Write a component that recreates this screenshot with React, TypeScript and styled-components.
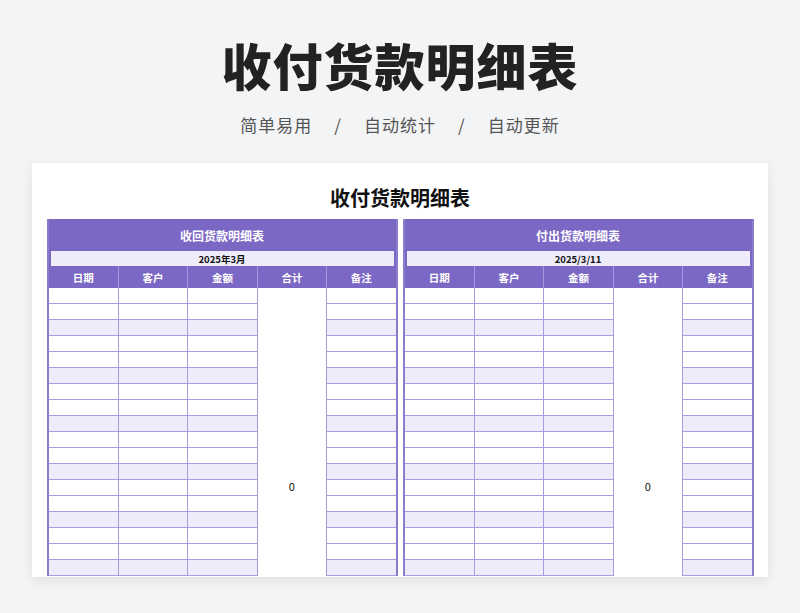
import React from "react";
import styled, { createGlobalStyle } from "styled-components";

const G = createGlobalStyle`
  html,body{margin:0;padding:0;background:#f3f4f6;}
  body{font-family:"Noto Sans CJK SC","Noto Sans",sans-serif;overflow:hidden;}
`;
const Page = styled.div`width:800px;height:613px;display:flex;flex-direction:column;align-items:center;`;
const Title = styled.h1`margin:28px 0 0;font-size:50px;line-height:72px;font-weight:900;color:#222;letter-spacing:1px;`;
const Sub = styled.div`margin-top:12px;font-size:17px;color:#555;display:flex;gap:22px;letter-spacing:1px;`;
const Card = styled.div`margin-top:26px;width:736px;height:414px;background:#fff;box-shadow:0 4px 12px rgba(0,0,0,0.08);display:flex;flex-direction:column;align-items:center;overflow:hidden;`;
const CardTitle = styled.div`margin-top:18px;font-size:20px;font-weight:700;color:#111;line-height:34px;`;
const Tables = styled.div`margin-top:4px;display:flex;gap:5px;`;
const Table = styled.div`width:351px;border-left:2px solid #8c7dcc;border-right:2px solid #8c7dcc;box-sizing:border-box;display:flex;flex-direction:column;`;
const Head = styled.div`height:32px;background:#7b68c4;color:#fff;font-size:12px;font-weight:700;display:flex;align-items:center;justify-content:center;`;
const DateRow = styled.div`height:15px;background:#eeebfa;border:2px solid #7b68c4;border-top:none;border-bottom:none;font-size:9.5px;font-weight:700;display:flex;align-items:center;justify-content:center;color:#111;`;
const Cols = styled.div`display:grid;grid-template-columns:repeat(5,1fr);height:22px;background:#7b68c4;`;
const Col = styled.div`color:#fff;font-size:10.5px;font-weight:700;display:flex;align-items:center;justify-content:center;border-left:1px solid #a597db;&:first-child{border-left:none;}`;
const Body = styled.div`display:grid;grid-template-columns:repeat(5,1fr);grid-template-rows:repeat(18,16px);`;
const Cell = styled.div<{ $l: boolean }>`background:${p => p.$l ? "#eeebfa" : "#fff"};border-bottom:1.5px solid #a99be0;border-left:1px solid #a99be0;box-sizing:border-box;`;
const Sum = styled.div`grid-column:4;grid-row:1 / span 18;background:#fff;border-left:1px solid #a99be0;display:flex;align-items:center;justify-content:center;font-size:11px;color:#111;padding-top:108px;box-sizing:border-box;`;

const T = ({ t, d }: { t: string; d: string }) => (
  <Table>
    <Head>{t}</Head>
    <DateRow>{d}</DateRow>
    <Cols>{["日期", "客户", "金额", "合计", "备注"].map(c => <Col key={c}>{c}</Col>)}</Cols>
    <Body>
      {Array.from({ length: 18 }).flatMap((_, r) =>
        [1, 2, 3, 5].map(c => <Cell key={r + "-" + c} $l={r % 3 === 2} style={{ gridColumn: c, gridRow: r + 1, borderLeft: c === 1 ? "none" : undefined }} />)
      )}
      <Sum>0</Sum>
    </Body>
  </Table>
);

export default function App() {
  return (
    <Page>
      <G />
      <Title>收付货款明细表</Title>
      <Sub><span>简单易用</span><span>/</span><span>自动统计</span><span>/</span><span>自动更新</span></Sub>
      <Card>
        <CardTitle>收付货款明细表</CardTitle>
        <Tables>
          <T t="收回货款明细表" d="2025年3月" />
          <T t="付出货款明细表" d="2025/3/11" />
        </Tables>
      </Card>
    </Page>
  );
}
